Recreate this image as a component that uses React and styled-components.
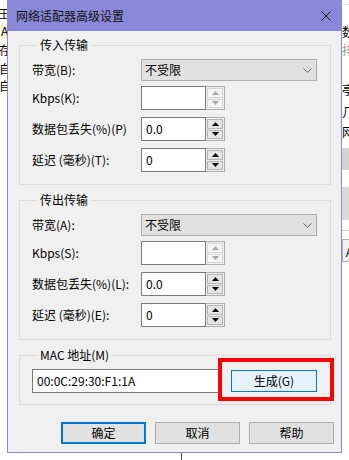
import React from "react";
import styled, { createGlobalStyle } from "styled-components";

const GlobalStyle = createGlobalStyle`
  html, body {
    margin: 0;
    padding: 0;
    background: #fff;
  }
  body {
    font-family: "Noto Sans CJK SC", "Noto Sans", sans-serif;
    font-size: 12px;
    color: #000;
  }
  * {
    box-sizing: border-box;
  }
`;

const Desktop = styled.div`
  width: 349px;
  height: 460px;
  overflow: hidden;
  display: flex;
  flex-direction: column;
  background: #fff;
`;

const TopArea = styled.div`
  display: flex;
  height: 453px;
`;

// strips of the window behind the dialog, cut off by it
const Strip = styled.div`
  width: 7px;
  flex: none;
  overflow: hidden;
  display: flex;
  flex-direction: column;
  align-items: flex-start;
`;

const StripLine = styled.div`
  flex: none;
  margin-top: ${(p) => p.$top || 0}px;
  margin-left: ${(p) => p.$left || 0}px;
  height: ${(p) => p.$h || 16}px;
  line-height: ${(p) => p.$h || 16}px;
  width: ${(p) => p.$w || 14}px;
  white-space: nowrap;
  font-size: 12px;
  color: ${(p) => p.$color || "#000"};
  background: ${(p) => p.$bg || "transparent"};
  border: ${(p) => (p.$border ? `1px solid ${p.$border}` : "none")};
`;

const Window = styled.div`
  width: 335px;
  flex: none;
  display: flex;
  flex-direction: column;
  background: #f0f0f0;
  border: 1px solid #8a88d8;
  border-top: none;
`;

const TitleBar = styled.div`
  height: 31px;
  margin: 0 -1px;
  background: #8a88d8;
  display: flex;
  align-items: center;
  justify-content: space-between;
  padding: 0 11px 0 9px;
  font-size: 12px;
  line-height: 16px;
  color: #111;
`;

const Body = styled.div`
  flex: 1;
  display: flex;
  flex-direction: column;
  padding: 6px 10px 8px 11px;
`;

const Group = styled.fieldset`
  margin: 0 0 ${(p) => p.$after || 0}px 0;
  padding: 6px 0 ${(p) => p.$bottom || 12}px 12px;
  border: 1px solid #dcdcdc;
  min-width: 0;
`;

const Legend = styled.legend`
  margin-left: 5px;
  padding: 0 3px;
  height: 16px;
  font-size: 12px;
  line-height: 16px;
  color: #000;
`;

const Rows = styled.div`
  display: flex;
  flex-direction: column;
`;

const Row = styled.div`
  display: grid;
  grid-template-columns: 109px auto;
  align-items: center;
  height: ${(p) => p.$h}px;
  margin-top: ${(p) => p.$top || 0}px;
`;

const Label = styled.span`
  font-size: 12px;
  line-height: 16px;
  white-space: nowrap;
`;

const Select = styled.div`
  width: 176px;
  height: 22px;
  background: #e1e1e1;
  border: 1px solid #adadad;
  display: flex;
  align-items: center;
  justify-content: space-between;
  padding: 0 4px 0 3px;
  font-size: 12px;
  line-height: 16px;
`;

const SpinBox = styled.div`
  display: flex;
  height: 24px;
`;

const Field = styled.div`
  width: ${(p) => p.$w || 65}px;
  height: 24px;
  background: #fff;
  border: 1px solid #7a7a7a;
  padding: 0 4px;
  display: flex;
  align-items: center;
  font-size: 12px;
  line-height: 16px;
  white-space: nowrap;
`;

const Spinner = styled.div`
  width: 19px;
  height: 24px;
  border: 1px solid #adadad;
  border-left: none;
  background: #f0f0f0;
  padding: 1px;
  display: flex;
  flex-direction: column;
  gap: 1px;
`;

const SpinButton = styled.div`
  flex: 1;
  display: flex;
  align-items: center;
  justify-content: center;
  background: ${(p) => (p.$disabled ? "#f4f4f4" : "#e5e5e5")};
  border: 1px solid ${(p) => (p.$disabled ? "#d6d6d6" : "#b4b4b4")};
`;

const MacRow = styled.div`
  position: relative;
  display: flex;
  align-items: center;
  gap: 9px;
  height: 24px;
`;

const GenButton = styled.div`
  width: 86px;
  height: 22px;
  background: #e5f1fb;
  border: 1px solid #0078d7;
  display: flex;
  align-items: center;
  justify-content: center;
  font-size: 12px;
  line-height: 16px;
`;

// red annotation frame drawn over the dialog
const Highlight = styled.div`
  position: absolute;
  left: 186px;
  top: -11px;
  width: 116px;
  height: 43px;
  border: 4px solid #ff0000;
  pointer-events: none;
`;

const Footer = styled.div`
  margin-top: 17px;
  display: flex;
  justify-content: flex-end;
  gap: 9px;
  padding-right: 7px;
  margin-right: -10px;
`;

const DialogButton = styled.div`
  width: 85px;
  height: 22px;
  background: #e1e1e1;
  border: ${(p) => (p.$default ? "2px solid #0078d7" : "1px solid #adadad")};
  display: flex;
  align-items: center;
  justify-content: center;
  font-size: 12px;
  line-height: 16px;
`;

const BottomArea = styled.div`
  height: 7px;
  padding-left: 181px;
`;

const Tick = styled.div`
  width: 1px;
  height: 7px;
  background: #4d4d4d;
`;

const Chevron = () => (
  <svg width="9" height="5" viewBox="0 0 9 5">
    <path d="M0.5 0.5 L4.5 4.2 L8.5 0.5" fill="none" stroke="#606060" strokeWidth="1" />
  </svg>
);

const Arrow = ({ down, disabled }) => (
  <svg width="7" height="4" viewBox="0 0 7 4">
    <path
      d={down ? "M0 0 H7 L3.5 4 Z" : "M3.5 0 L7 4 H0 Z"}
      fill={disabled ? "#a8a8a8" : "#000"}
    />
  </svg>
);

const CloseIcon = () => (
  <svg width="10" height="10" viewBox="0 0 10 10">
    <path d="M0.5 0.5 L9.5 9.5 M9.5 0.5 L0.5 9.5" stroke="#1a1a1a" strokeWidth="1" />
  </svg>
);

const NumberInput = ({ value, disabled }) => (
  <SpinBox>
    <Field>{value}</Field>
    <Spinner>
      <SpinButton $disabled={disabled}>
        <Arrow disabled={disabled} />
      </SpinButton>
      <SpinButton $disabled={disabled}>
        <Arrow down disabled={disabled} />
      </SpinButton>
    </Spinner>
  </SpinBox>
);

const TransferGroup = ({ title, keys, colon }) => (
  <Group $after={7}>
    <Legend>{title}</Legend>
    <Rows>
      <Row $h={22}>
        <Label>带宽({keys[0]}):</Label>
        <Select>
          <span>不受限</span>
          <Chevron />
        </Select>
      </Row>
      <Row $h={24} $top={5}>
        <Label>Kbps({keys[1]}):</Label>
        <NumberInput value="" disabled />
      </Row>
      <Row $h={24} $top={7}>
        <Label>数据包丢失(%)({keys[2]}){colon ? ":" : ""}</Label>
        <NumberInput value="0.0" />
      </Row>
      <Row $h={24} $top={7}>
        <Label>延迟 (毫秒)({keys[3]}):</Label>
        <NumberInput value="0" />
      </Row>
    </Rows>
  </Group>
);

export default function App() {
  return (
    <>
      <GlobalStyle />
      <Desktop>
        <TopArea>
          <Strip>
            <StripLine $top={6} $left={-2}>王</StripLine>
            <StripLine $top={1} $left={1} $w={9} $bg="#fbf3d0">A</StripLine>
            <StripLine $top={3} $left={-1}>存</StripLine>
            <StripLine $top={3} $left={-1}>自</StripLine>
            <StripLine $top={1} $left={-1}>自</StripLine>
          </Strip>
          <Window>
            <TitleBar>
              <span>网络适配器高级设置</span>
              <CloseIcon />
            </TitleBar>
            <Body>
              <TransferGroup title="传入传输" keys={["B", "K", "P", "T"]} />
              <TransferGroup title="传出传输" keys={["A", "S", "L", "E"]} colon />
              <Group $bottom={11}>
                <Legend>MAC 地址(M)</Legend>
                <MacRow>
                  <Field $w={190}>00:0C:29:30:F1:1A</Field>
                  <GenButton>生成(G)</GenButton>
                  <Highlight />
                </MacRow>
              </Group>
              <Footer>
                <DialogButton $default>确定</DialogButton>
                <DialogButton>取消</DialogButton>
                <DialogButton>帮助</DialogButton>
              </Footer>
            </Body>
          </Window>
          <Strip>
            <StripLine $top={4} $h={1} $bg="#e3e3e3" />
            <StripLine $top={19}>数</StripLine>
            <StripLine $top={2} $color="#9a9a9a">排</StripLine>
            <StripLine $top={24}>亭</StripLine>
            <StripLine $top={6}>几</StripLine>
            <StripLine $top={4}>网</StripLine>
            <StripLine $top={8} $h={22} $bg="#d4d4d4" />
            <StripLine $top={17} $h={33} $bg="#dadada" />
            <StripLine $top={10} $h={1} $bg="#d0d0d0" />
            <StripLine $top={8} $h={23} $bg="#f0f0f0" $border="#adadad">
              &nbsp;A
            </StripLine>
          </Strip>
        </TopArea>
        <BottomArea>
          <Tick />
        </BottomArea>
      </Desktop>
    </>
  );
}
